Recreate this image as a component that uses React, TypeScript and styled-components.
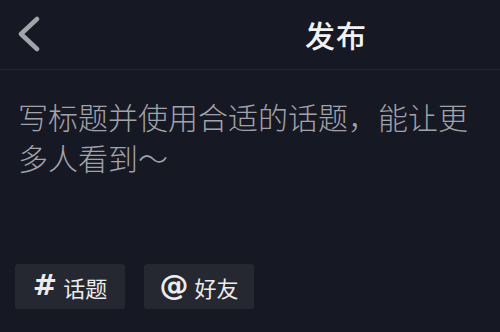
import { createGlobalStyle, styled } from "styled-components";

const GlobalStyle = createGlobalStyle`
  html, body {
    margin: 0;
    padding: 0;
    background: #161823;
  }
  body {
    font-family: "Noto Sans CJK SC", "Noto Sans", sans-serif;
  }
`;

const Page = styled.div`
  width: 500px;
  height: 332px;
  display: flex;
  flex-direction: column;
  background: #161823;
  overflow: hidden;
`;

const Header = styled.div`
  height: 69px;
  flex-shrink: 0;
  display: flex;
  align-items: center;
  padding-left: 18px;
  border-bottom: 1px solid #23252f;
  box-sizing: content-box;
`;

const BackButton = styled.div`
  width: 22px;
  height: 36px;
  display: flex;
  align-items: center;
  margin-top: -1px;
`;

const Title = styled.div`
  margin-left: 265px;
  margin-top: -2px;
  color: #f2f2f4;
  font-size: 30px;
  font-weight: 500;
  letter-spacing: 1px;
`;

const Placeholder = styled.div`
  flex: 1;
  padding: 26px 20px 0 18px;
  color: #a2a3aa;
  font-size: 30px;
  font-weight: 300;
  line-height: 41px;
`;

const ChipRow = styled.div`
  display: flex;
  gap: 19px;
  padding: 0 0 23px 15px;
`;

const Chip = styled.div`
  width: 110px;
  height: 45px;
  display: flex;
  align-items: center;
  justify-content: center;
  gap: 6px;
  background: #252731;
  border-radius: 3px;
  color: #ececee;
  font-size: 22px;
`;

const ChipMark = styled.span<{ $size: number }>`
  font-family: "DejaVu Sans", sans-serif;
  font-weight: 700;
  font-size: ${(p) => p.$size}px;
  line-height: 1;
  margin-top: -2px;
`;

const App = () => {
  return (
    <Page>
      <GlobalStyle />
      <Header>
        <BackButton>
          <svg width="22" height="36" viewBox="0 0 22 36">
            <polyline
              points="19,3 3,18 19,33"
              fill="none"
              stroke="#a3a4aa"
              strokeWidth="4.5"
              strokeLinecap="round"
              strokeLinejoin="round"
            />
          </svg>
        </BackButton>
        <Title>发布</Title>
      </Header>
      <Placeholder>写标题并使用合适的话题，能让更多人看到～</Placeholder>
      <ChipRow>
        <Chip>
          <ChipMark $size={29}>#</ChipMark>
          话题
        </Chip>
        <Chip>
          <ChipMark $size={29}>@</ChipMark>
          好友
        </Chip>
      </ChipRow>
    </Page>
  );
};

export default App;
